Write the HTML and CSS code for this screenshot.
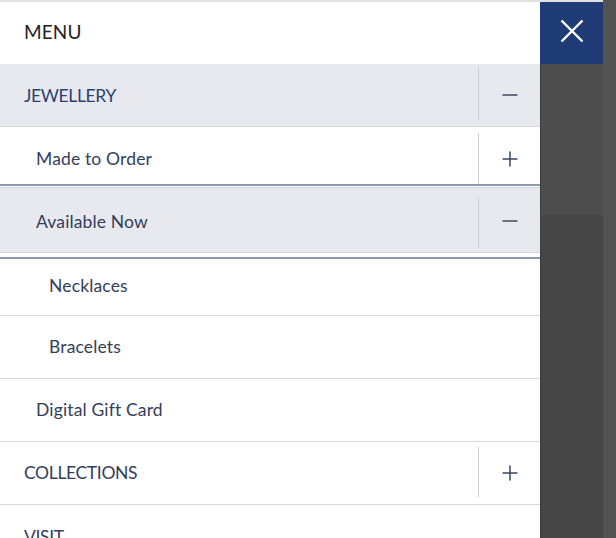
FILE: index.html
```html
<!DOCTYPE html>
<html lang="en">
<head>
<meta charset="utf-8">
<title>Menu</title>
<link rel="stylesheet" href="styles.css">
</head>
<body>
<div class="screen">
  <nav class="panel">
    <div class="menu-head">MENU</div>
    <ul class="list">
      <li class="row l1 shade jew">
        <span class="label">JEWELLERY</span>
        <span class="divider"></span>
        <span class="toggle"><svg width="16" height="16" viewBox="0 0 16 16"><path d="M0.5 8H15.5" /></svg></span>
      </li>
      <li class="row l2 made">
        <span class="label">Made to Order</span>
        <span class="divider"></span>
        <span class="toggle"><svg width="16" height="16" viewBox="0 0 16 16"><path d="M0.5 8H15.5M8 0.5V15.5" /></svg></span>
      </li>
      <li class="row l2 shade avail">
        <span class="label">Available Now</span>
        <span class="divider"></span>
        <span class="toggle"><svg width="16" height="16" viewBox="0 0 16 16"><path d="M0.5 8H15.5" /></svg></span>
      </li>
      <li class="sub">
        <ul class="list">
          <li class="row l3 neck"><span class="label">Necklaces</span></li>
          <li class="row l3 lift"><span class="label">Bracelets</span></li>
        </ul>
      </li>
      <li class="row l2 lift"><span class="label">Digital Gift Card</span></li>
      <li class="row l1 coll lift">
        <span class="label">COLLECTIONS</span>
        <span class="divider"></span>
        <span class="toggle"><svg width="16" height="16" viewBox="0 0 16 16"><path d="M0.5 8H15.5M8 0.5V15.5" /></svg></span>
      </li>
      <li class="row l1 visit lift"><span class="label">VISIT</span></li>
    </ul>
  </nav>
  <div class="overlay">
    <div class="overlay-main">
      <div class="topline"></div>
      <button class="close" aria-label="Close">
        <svg width="24" height="24" viewBox="0 0 24 24"><path d="M1.5 1.5L22.5 22.5M22.5 1.5L1.5 22.5" /></svg>
      </button>
      <div class="blk-upper"></div>
      <div class="blk-lower"></div>
    </div>
    <div class="overlay-strip"></div>
  </div>
</div>
</body>
</html>
```
FILE: styles.css
```css
* { box-sizing: border-box; }

html, body {
  margin: 0;
  padding: 0;
  background: #4b4b4b;
}

.screen {
  display: flex;
  width: 616px;
  height: 538px;
  overflow: hidden;
  font-family: Lato, "Open Sans", sans-serif;
}

.panel {
  width: 540px;
  flex: none;
  background: #ffffff;
  border-top: 2px solid #e2e2e4;
}

.menu-head {
  height: 62px;
  display: flex;
  align-items: center;
  padding-left: 24px;
  padding-bottom: 3px;
  font-size: 19px;
  color: #222222;
  letter-spacing: 0.1px;
}

.list {
  list-style: none;
  margin: 0;
  padding: 0;
}

.row {
  display: flex;
  align-items: stretch;
  height: 63px;
  border-bottom: 1px solid #d5d8df;
  color: #333e5a;
  font-size: 17.5px;
}

.row .label {
  flex: 1;
  display: flex;
  align-items: center;
  letter-spacing: 0.15px;
}

.l1 .label { padding-left: 24px; letter-spacing: -0.35px; }
.l2 .label { padding-left: 36px; }
.l3 .label { padding-left: 49px; }

.lift .label { padding-bottom: 1px; }

.shade { background: #e8e9ee; }

.jew { color: #2d4170; }

.divider {
  width: 1px;
  background: #cbcfd9;
  margin: 6px 0;
}

.toggle {
  width: 61px;
  display: flex;
  align-items: center;
  justify-content: center;
}

.toggle svg path {
  stroke: #3a4662;
  stroke-width: 1.5;
  fill: none;
}

.jew .divider { margin: 3px 0 6px; }

.made {
  height: 59px;
  padding-top: 6px;
  border-bottom: 2px solid #8d98b0;
}
.made .divider { margin: 0; }

.avail {
  height: 66px;
  margin-top: 1px;
  padding-top: 2px;
  border-top: 1px solid #d1d5dd;
  border-bottom: 1px solid #d1d5dd;
  margin-bottom: 4px;
}
.avail .divider { margin: 7px 0 4px; }

.sub {
  border-top: 2px solid #8d98b0;
}

.neck {
  height: 57px;
  padding-bottom: 4px;
}

.coll .divider { margin: 5px 0 7px; }
.coll .toggle { padding-bottom: 1px; }

.visit { border-bottom: none; }

.overlay {
  flex: 1;
  display: flex;
}

.overlay-main {
  width: 63px;
  display: flex;
  flex-direction: column;
  box-shadow: inset 1px 0 0 #3c3c3c;
}

.topline {
  height: 2px;
  background: #e2e2e4;
}

.close {
  height: 62px;
  border: none;
  margin: 0;
  padding: 0 0 5px;
  background: #1f3b76;
  display: flex;
  align-items: center;
  justify-content: center;
}

.close svg path {
  stroke: #ffffff;
  stroke-width: 2.4;
  fill: none;
}

.blk-upper {
  height: 151px;
  background: #4d4d4d;
  box-shadow: inset 1px 0 0 #3c3c3c;
}

.blk-lower {
  flex: 1;
  background: #464646;
  box-shadow: inset 1px 0 0 #3c3c3c;
}

.overlay-strip {
  flex: 1;
  background: #535353;
}
```
